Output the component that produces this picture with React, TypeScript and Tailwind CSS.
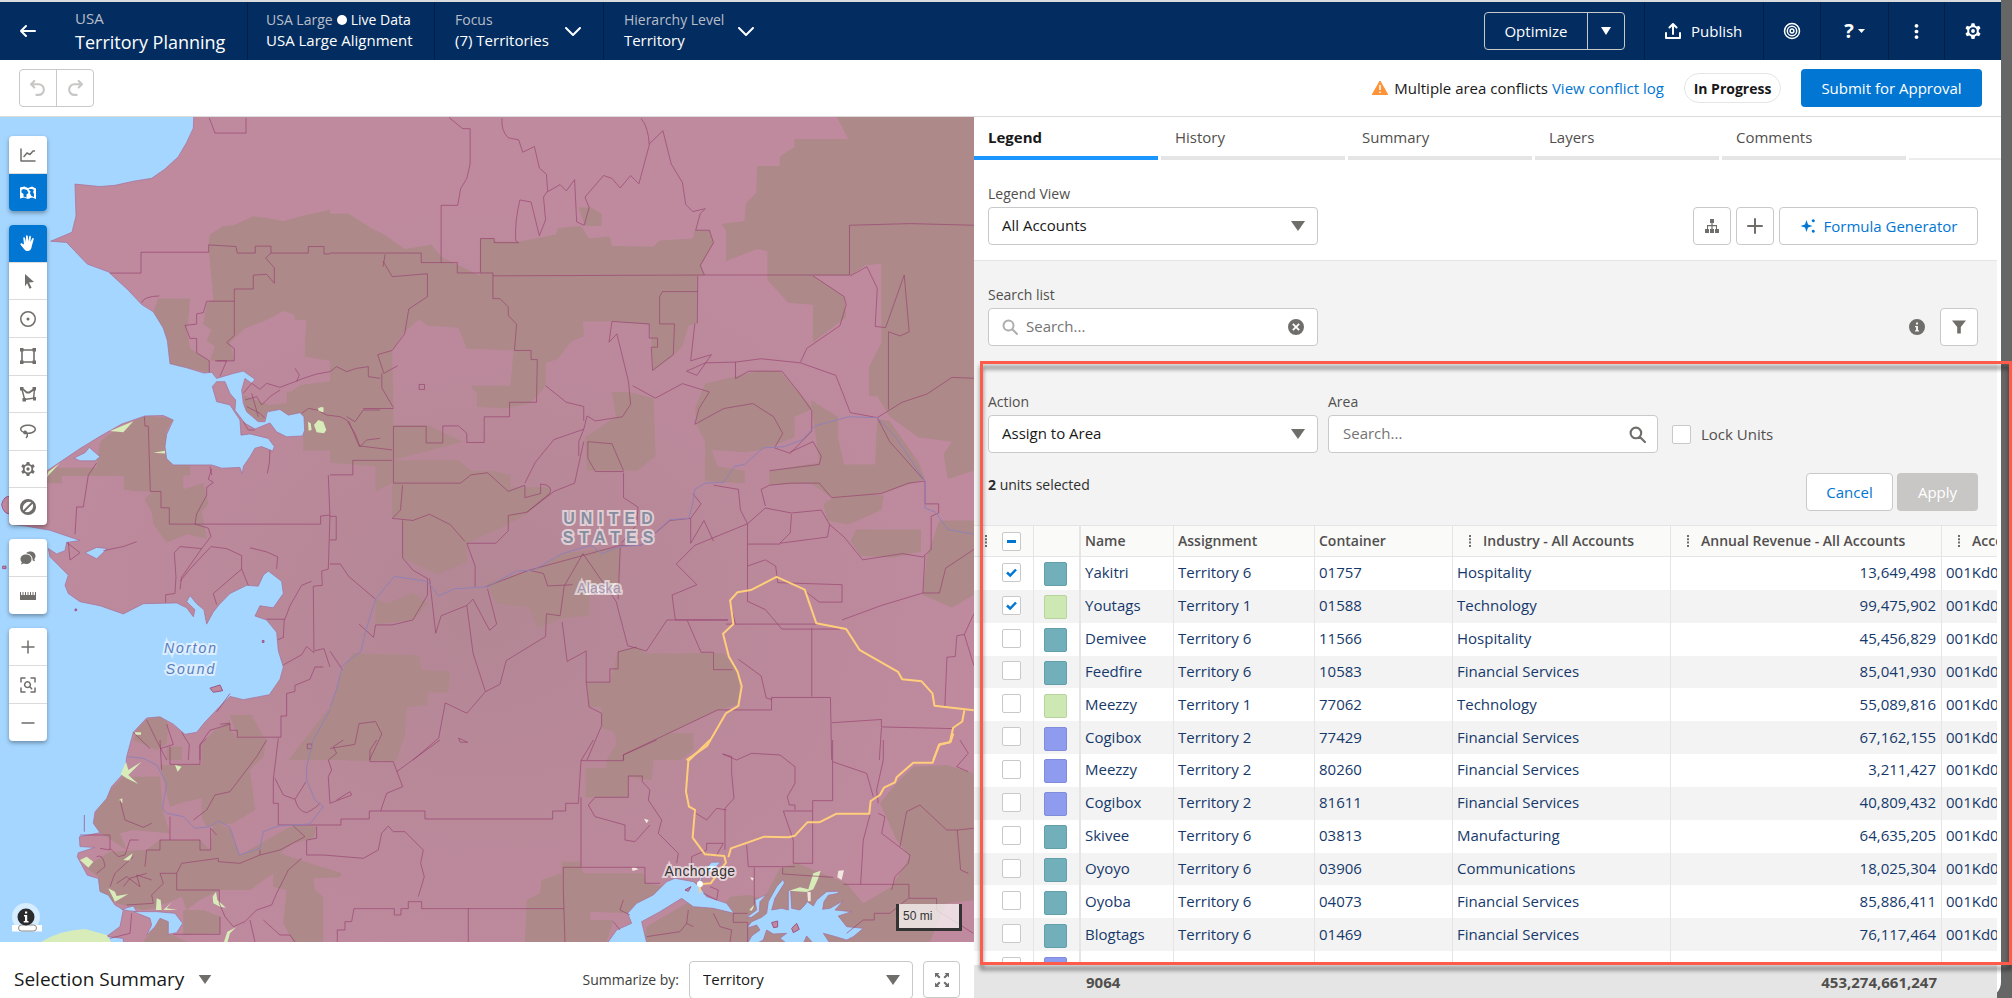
import React from "react";

type IconProps = { d: string; className?: string; viewBox?: string };

function Glyph({ d, className = "h-4 w-4", viewBox = "0 0 16 16" }: IconProps) {
  return (
    <svg viewBox={viewBox} className={className} fill="currentColor" aria-hidden="true">
      <path fillRule="evenodd" d={d} />
    </svg>
  );
}

function Stroke({ d, className = "h-4 w-4", viewBox = "0 0 16 16", width = 2 }: IconProps & { width?: number }) {
  return (
    <svg
      viewBox={viewBox}
      className={className}
      fill="none"
      stroke="currentColor"
      strokeWidth={width}
      strokeLinecap="round"
      strokeLinejoin="round"
      aria-hidden="true"
    >
      <path d={d} />
    </svg>
  );
}

const GEAR =
  "M6.7 0h2.6l.5 2.1 1.5.9 2.1-.7 1.3 2.3-1.6 1.5v1.8l1.6 1.5-1.3 2.3-2.1-.7-1.5.9-.5 2.1H6.7l-.5-2.1-1.5-.9-2.1.7-1.3-2.3 1.6-1.5V6.1L1.300 4.600 2.600 2.300l2.100.7 1.500-.9ZM8 3.600a3.400 3.400 0 1 0 0 6.800 3.400 3.400 0 0 0 0-6.800Zm0 1.700a1.700 1.700 0 1 1 0 3.400 1.700 1.700 0 0 1 0-3.400Z";
const SEARCH = "M6.500 1.500a5 5 0 1 0 0 10 5 5 0 0 0 0-10M10.300 10.300 15 15";

const accounts = [
  { name: "Yakitri", assignment: "Territory 6", container: "01757", industry: "Hospitality", revenue: "13,649,498", checked: true },
  { name: "Youtags", assignment: "Territory 1", container: "01588", industry: "Technology", revenue: "99,475,902", checked: true },
  { name: "Demivee", assignment: "Territory 6", container: "11566", industry: "Hospitality", revenue: "45,456,829" },
  { name: "Feedfire", assignment: "Territory 6", container: "10583", industry: "Financial Services", revenue: "85,041,930" },
  { name: "Meezzy", assignment: "Territory 1", container: "77062", industry: "Technology", revenue: "55,089,816" },
  { name: "Cogibox", assignment: "Territory 2", container: "77429", industry: "Financial Services", revenue: "67,162,155" },
  { name: "Meezzy", assignment: "Territory 2", container: "80260", industry: "Financial Services", revenue: "3,211,427" },
  { name: "Cogibox", assignment: "Territory 2", container: "81611", industry: "Financial Services", revenue: "40,809,432" },
  { name: "Skivee", assignment: "Territory 6", container: "03813", industry: "Manufacturing", revenue: "64,635,205" },
  { name: "Oyoyo", assignment: "Territory 6", container: "03906", industry: "Communications", revenue: "18,025,304" },
  { name: "Oyoba", assignment: "Territory 6", container: "04073", industry: "Financial Services", revenue: "85,886,411" },
  { name: "Blogtags", assignment: "Territory 6", container: "01469", industry: "Financial Services", revenue: "76,117,464" },
  { name: "Yakitri", assignment: "Territory 2", container: "02138", industry: "Hospitality", revenue: "28,882,807" },
];

const swatches: Record<string, string> = {
  "Territory 1": "bg-[#cde8b2] border-[#b9d39f]",
  "Territory 2": "bg-[#8e9bef] border-[#808cd9]",
  "Territory 6": "bg-[#71b0bb] border-[#629faa]",
};

function HeaderMenu({ label, value }: { label: string; value: string }) {
  return (
    <button className="flex items-center gap-4 border-r border-[#021f45] pl-5 pr-[22px] text-left">
      <span className="block pb-[3px] text-[14px] leading-5">
        <span className="block text-[#b8bec9]">{label}</span>
        <span className="block text-[15px]">{value}</span>
      </span>
      <Stroke d="M1 1l7 7 7-7" viewBox="0 0 16 9" className="h-[9px] w-4" />
    </button>
  );
}

function Header() {
  return (
    <header className="flex h-[60px] shrink-0 border-t-2 border-[#d9dbde] bg-[#032d60] text-white">
      <button aria-label="Back" className="flex w-[56px] items-center justify-center">
        <Stroke d="M15 7H1M6 2L1 7l5 5" viewBox="0 0 16 14" className="h-3.5 w-4" />
      </button>
      <div className="flex w-[192px] flex-col justify-center border-r border-[#021f45] pb-0.5 pl-[19px]">
        <span className="text-[15px] leading-6 text-[#b8bec9]">USA</span>
        <h1 className="whitespace-nowrap text-[18px] leading-6">Territory Planning</h1>
      </div>
      <div className="flex w-[187px] flex-col justify-center whitespace-nowrap border-r border-[#021f45] pb-[3px] pl-[18px] text-[15px] leading-5">
        <span className="flex items-center text-[14px]">
          <span className="text-[#b8bec9]">USA Large</span>
          <span className="mx-1 h-2.5 w-2.5 rounded-full bg-white" />
          Live Data
        </span>
        <span>USA Large Alignment</span>
      </div>
      <HeaderMenu label="Focus" value="(7) Territories" />
      <button className="flex items-center gap-3.5 pl-5 text-left">
        <span className="block pb-[3px] text-[14px] leading-5">
          <span className="block text-[#b8bec9]">Hierarchy Level</span>
          <span className="block text-[15px]">Territory</span>
        </span>
        <Stroke d="M1 1l7 7 7-7" viewBox="0 0 16 9" className="h-[9px] w-4" />
      </button>

      <div className="ml-auto flex">
        <div className="my-auto mr-[19px] flex h-[38px] rounded border border-[#c9c9c9]">
          <button className="w-[103px] border-r border-[#c9c9c9] text-[15px]">Optimize</button>
          <button aria-label="Optimize options" className="flex w-9 items-center justify-center">
            <Glyph d="M0 0h10L5 8z" viewBox="0 0 10 8" className="h-2 w-2.5" />
          </button>
        </div>
        <button className="flex w-[119px] items-center gap-2.5 border-l border-[#021f45] pl-5 text-[15px]">
          <Stroke d="M8 11V1M4.500 4.500L8 1l3.500 3.500M1 10v5h14v-5" className="h-4 w-4" />
          Publish
        </button>
        <button aria-label="Target" className="flex w-[57px] items-center justify-center border-l border-[#021f45]">
          <svg viewBox="0 0 18 18" className="h-[18px] w-[18px]" fill="none" stroke="currentColor" strokeWidth="1.500">
            <circle cx="9" cy="9" r="7.500" />
            <circle cx="9" cy="9" r="4.700" />
            <circle cx="9" cy="9" r="1.900" />
          </svg>
        </button>
        <button aria-label="Help" className="flex w-[68px] items-center justify-center gap-1 border-l border-[#021f45]">
          <span className="text-[20px] font-bold">?</span>
          <Glyph d="M0 0h7L3.500 4z" viewBox="0 0 7 4" className="h-1 w-[7px]" />
        </button>
        <button aria-label="More" className="flex w-14 items-center justify-center border-l border-[#021f45]">
          <Glyph
            d="M8 0a2 2 0 1 0 .01 0zM8 6a2 2 0 1 0 .01 0zM8 12a2 2 0 1 0 .01 0z"
            className="h-[15px] w-[15px]"
          />
        </button>
        <button aria-label="Settings" className="flex w-[57px] items-center justify-center border-l border-[#021f45]">
          <Glyph d={GEAR} viewBox="0 0 16 14" className="h-4 w-[18px]" />
        </button>
      </div>
    </header>
  );
}

function ActionBar() {
  return (
    <div className="flex h-[57px] shrink-0 items-center border-b border-[#dddbda] bg-white pl-[19px] pr-[19px] text-[15px]">
      <div className="flex h-[38px] rounded border border-[#c9c9c9] text-[#c9c7c5]">
        <button aria-label="Undo" className="flex w-[37px] items-center justify-center border-r border-[#c9c9c9]">
          <Stroke d="M4 1L1 4l3 3M1.500 4H8a5 5 0 0 1 0 10H6" viewBox="0 0 15 15" className="h-4 w-4" />
        </button>
        <button aria-label="Redo" className="flex w-[36px] items-center justify-center">
          <Stroke d="M11 1l3 3-3 3M13.500 4H7a5 5 0 0 0 0 10h2" viewBox="0 0 15 15" className="h-4 w-4" />
        </button>
      </div>
      <svg viewBox="0 0 16 14" className="ml-auto mr-1.5 h-3.5 w-4">
        <path d="M8 0 16 14H0z" fill="#fe9339" stroke="#fe9339" strokeLinejoin="round" />
        <path d="M8 4v5M8 10.500v1.500" stroke="#fff" strokeWidth="1.500" />
      </svg>
      <span className="text-[#181818]">
        Multiple area conflicts{" "}
        <a href="#conflicts" className="text-[#0176d3]">
          View conflict log
        </a>
      </span>
      <span className="ml-5 flex h-[30px] w-[97px] items-center justify-center rounded-full border border-[#e5e5e5] text-[14px] font-bold text-[#181818]">
        In Progress
      </span>
      <button className="ml-5 h-[38px] w-[181px] rounded bg-[#0176d3] text-[15px] text-white">Submit for Approval</button>
    </div>
  );
}

const tools = [
  { label: "Select", d: "M5 1l9 8-5 .4 2.600 5.400-2 .9-2.500-5.500L5 13.500z" },
  {
    label: "Radius",
    d: "M8 0a8 8 0 1 1 0 16A8 8 0 0 1 8 0m0 1.500a6.500 6.500 0 1 0 0 13 6.500 6.500 0 0 0 0-13M8 6.500a1.500 1.500 0 1 1 0 3 1.500 1.500 0 0 1 0-3",
  },
  {
    label: "Rectangle",
    d: "M0 0h3.500v1.200h9V0H16v3.500h-1.200v9H16V16h-3.500v-1.200h-9V16H0v-3.500h1.200v-9H0zM2.800 3.500v9h.7v.7h9v-.7h.7v-9h-.7v-.7h-9v.7z",
  },
  {
    label: "Polygon",
    d: "M0 1h3.500v1.500L7 5.500h2L12.500 3V1H16v3.500h-1L14.500 11H16v3.500h-3V13l-7 1v1.500H2.500V12H3.500L1.500 4.500H0zM3 4.200L5 12h1v.6l7-1V11l.6-6.300L9.500 7.500h-3z",
  },
  {
    label: "Lasso",
    d: "M8 1.500c4.500 0 8 2 8 4.700 0 2.800-3.500 4.800-8 4.800v2.500l-1.500 2-1-1 1-1.500v-2.200c-1 1-3.500.5-3.500-1.300C1 8.700 0 7.500 0 6.200 0 3.500 3.500 1.500 8 1.500M8 3C4.500 3 1.500 4.500 1.500 6.200c0 .8.700 1.500 1.800 2.200 1-1.500 3.200-1.300 4.200 1.100 4 0 7-1.500 7-3.300S11.500 3 8 3",
  },
  { label: "Settings", d: GEAR, viewBox: "0 0 16 14" },
  {
    label: "Clear",
    d: "M8 0a8 8 0 1 1 0 16A8 8 0 0 1 8 0M3.300 11.300l8-8A6.200 6.200 0 0 0 3.300 11.300m9.400-6.600-8 8a6.200 6.200 0 0 0 8-8",
  },
];

const toolButton = "flex w-full flex-1 items-center justify-center text-[#706e6b]";
const toolGroup = "flex flex-col divide-y divide-[#dddbda] overflow-hidden rounded bg-white shadow-[0_2px_4px_rgba(0,0,0,0.35)]";

function MapToolbar() {
  return (
    <div className="absolute left-[9px] top-[19px] flex w-[38px] flex-col gap-3.5">
      <div className={`${toolGroup} h-[75px]`}>
        <button aria-label="Chart" className={toolButton}>
          <Stroke d="M1 2v12h14M4 9.500l3-3.500 3 1.500 3-3.500h1.500" width={1.500} />
        </button>
        <button aria-label="Map" className="flex w-full flex-1 items-center justify-center bg-[#0176d3] text-white">
          <Glyph d="M0 2.500l4.500-1 3.500 1.500 4-1.500 4 2V14l-4-1.500L8 14l-4-1.500-4 1zM1.500 5v2.500l2 1.500v2.500l3 1V9.500l2-1.500-1.500-3L3.500 4zM9.500 4l-1 1 2 1-.5 2.500 1.500 2.500 2.500 1V9l-1-2 1-2-2-1z" />
        </button>
      </div>
      <div className={`${toolGroup} h-[300px]`}>
        <button aria-label="Pan" className="flex w-full flex-1 items-center justify-center bg-[#0176d3] text-white">
          <Glyph d="M4 9.500L3.300 3.200C3.200 2 4.700 1.800 5 3l.9 4L6 1.300C6 0 7.600 0 7.800 1.200L8.200 6.500 9.200 1.500C9.500.4 11 .6 10.900 1.900L10.400 7.200l1.700-3.600c.5-1 1.900-.5 1.600.7l-1.800 6.500C11.300 14 10.500 16 8 16c-2 0-3.400-1-4.400-2.600L.6 9.700c-.6-1 .6-1.900 1.500-1.200z" />
        </button>
        {tools.map((tool) => (
          <button key={tool.label} aria-label={tool.label} className={toolButton}>
            <Glyph d={tool.d} viewBox={tool.viewBox} />
          </button>
        ))}
      </div>
      <div className={`${toolGroup} h-[75px]`}>
        <button aria-label="Comments" className={toolButton}>
          <Glyph d="M6 4.500c3.300 0 5.500 2 5.500 4.700S9.300 14 6 14c-.8 0-1.500-.1-2.200-.4L1 14.500l.8-2.300C1 11.400.5 10.400.5 9.200.5 6.500 2.700 4.500 6 4.500M6 3.300C7 2 8.600 1.500 10.200 1.500c3.200 0 5.300 2 5.300 4.500 0 1.200-.5 2.200-1.200 3l.7 2.300-2.300-.8C13 6.500 10 3.500 6 3.300" />
        </button>
        <button aria-label="Measure" className={toolButton}>
          <Glyph d="M0 4h1v3h1.500V4h1v3H5V4h1v3h1.500V4h1v3H10V4h1v3h1.500V4h1v3H15V4h1v8H0z" />
        </button>
      </div>
      <div className={`${toolGroup} h-[113px]`}>
        <button aria-label="Zoom in" className={toolButton}>
          <Stroke d="M8 2v12M2 8h12" width={1.500} />
        </button>
        <button aria-label="Zoom to fit" className={toolButton}>
          <Stroke d="M1 5V1h4M11 1h4v4M15 11v4h-4M5 15H1v-4M7.500 4.800a2.900 2.900 0 1 0 .01 0M9.800 9.800l1.900 1.900" width={1.500} />
        </button>
        <button aria-label="Zoom out" className={toolButton}>
          <Stroke d="M2 8h12" width={1.500} />
        </button>
      </div>
    </div>
  );
}

const WEST = "translate(0 120) scale(0.3333 0.4082)";
const KOTZEBUE = "translate(180 350) scale(0.3333)";
const INTERIOR = "translate(330 110) scale(0.4146)";
const SOUTHWEST = "translate(0 740) scale(0.3333)";
const SOUTHEAST = "translate(480 740) scale(0.3333)";
const SOUND = "translate(600 830) scale(0.3333)";

const forest = [
  {
    tile: WEST,
    d: "M625 305L630 280 670 260 700 258 760 236 800 240 850 248 905 235 990 220V640L900 650 880 660 860 690 905 700 870 715 910 730V810H990V590L915 580V545L920 490 885 490 880 475 850 468 800 490 735 510 690 545 703 590 630 590 645 555 620 540 635 515 610 500 620 450 640 440ZM475 437H570L565 490 560 510 570 560 628 590V618L560 607 510 597 502 540 460 470ZM435 725L520 730 500 760 495 810 520 845H570V870H550V905L610 890 625 940 605 960 620 1025 560 1015 500 1035 460 990 455 960 435 930 455 910H410L372 905V872H185V890H140L150 852H290L300 790 320 775 380 745Z",
  },
  {
    tile: KOTZEBUE,
    d: "M190 135L225 150 270 165 320 160 320 125H345L370 155V185L325 195 300 178 262 183 250 212 230 210 200 185Z",
  },
  {
    tile: INTERIOR,
    d: "M1222 15H1553V700L1300 690V620L1330 560V370L1290 375 1255 400H1165L1240 450 1245 500 1165 560V470L1105 465 1055 410V340L1030 335 955 365V290L945 275 1000 268 1003 225 1028 200 1030 135H1085V112L1120 90V70H1250Z" +
      "M0 250L45 250 100 285 130 300 180 335 245 325 270 355 362 400V310H395L400 318 455 318 545 300 550 285 605 280 625 310 675 305 680 328 780 330 795 315 875 310 880 290H915L925 320 895 375 903 400H887L885 515 865 520 850 570 830 590 780 630 775 550 770 518 685 510H610L612 545 580 560 550 600 520 610V665L500 690 480 708 420 720 355 715V685L340 665H435L443 580 330 575 310 525 235 520 215 505 175 540 150 580 153 760H235L320 800 150 845V900L110 920 110 860 0 850Z" +
      "M600 235H630L655 250V280H615Z M150 845H310L340 870 390 870 435 880V910H530V930L480 970 430 1000 330 1045V1090L260 1120 175 1080V990L150 980Z" +
      "M680 680H720L780 695 785 835 740 870H620L615 790 690 740ZM905 660L1040 628 1085 630 1130 680 1165 720 1120 740 1120 790 1040 820 1000 825 920 820 935 860 1000 870 1000 900 905 895V800L885 760 880 720Z" +
      "M1160 700L1225 740 1225 790 1240 855H1315L1320 745 1350 750 1420 850 1435 890 1330 925 1210 935 1160 900 1060 905 1060 870 1180 850ZM1320 690H1553V870L1490 890 1480 830 1500 800 1420 790 1350 740ZM1190 950L1240 920 1335 930 1330 965 1250 1000 1200 990ZM1270 1012H1425V1065L1360 1080 1280 1075 1255 1040ZM1470 990H1553V1170L1500 1200 1430 1170 1440 1075Z" +
      "M500 1105L560 1070 600 1065 702 1055 695 1160 650 1140 625 1165V1220L560 1225 500 1250 480 1200 400 1190 380 1140ZM110 1180L140 1190 200 1165 235 1190 200 1230 110 1240ZM55 1310L215 1315 220 1350 290 1355 285 1405H235V1435L185 1440 180 1510 160 1568H-100L0 1440 30 1350ZM695 1305L740 1295 760 1310 950 1310 985 1360 990 1430 930 1450 700 1560 685 1500 655 1490V1440H625L620 1380H675Z",
  },
  {
    tile: SOUTHWEST,
    d: "M605 15L640 -25 690 -60V-30L712 -8H800L790 50 750 90 765 210 700 250 620 260 605 230V175L540 190 510 200 480 75H605ZM410 -30L440 -62 480 -70 505 -50 500 10 470 30 400 0ZM500 20H545V60H500ZM690 -75H755L790 -10H712ZM330 150L370 110 480 110 490 220 510 280 400 270 360 280 380 330 300 278 280 250 290 205ZM255 380L330 335 440 330 480 300 530 400 480 500 430 510 350 490 300 460 295 410ZM440 330L480 300 600 300 630 330 640 250 690 265 720 345 880 255 950 260 940 295 880 310 840 340 930 370 1025 400 1020 412 940 415 945 450 970 470V606H880L850 550 860 450 820 440V400L750 450H660L600 480 560 510 545 470 500 490 430 500 440 340ZM550 510H610L660 530V580L550 585ZM1040 -30H1190V62H1040ZM430 606L480 530 505 540V580L560 606Z",
  },
  {
    tile: SOUTHEAST,
    d: "M317 85H380V60L430 -20H640V30L600 60H520L515 120 445 110V172H317ZM1200 190L1250 130 1300 80 1400 75 1481 100V480L1400 490 1350 606H490L500 560 620 490 730 500 750 470 810 465 850 480 900 385 950 370 1100 430 1150 490 1235 440 1290 350 1250 300ZM135 606L140 480 180 460 185 420 245 400V365H300L310 400 490 400 500 430 550 440 450 520 330 515V540L400 540 380 606Z",
  },
];

const waters = [
  {
    tile: WEST,
    d: "M-5 -20H582L580 20 560 55 535 90 495 120 455 143 400 150 345 160 300 163 225 157 228 235 216 275 152 297 200 300 235 330 262 353 325 372 385 417 425 452 460 470 490 510 502 540 510 597 560 607 612 620 635 618 650 633 700 621 730 615 765 635 755 645 735 633 725 662 730 694 740 715 775 739 795 739 802 715 840 709 865 723 900 717 912 727 914 760 908 774 860 776 830 764 810 742 765 757 735 743 705 711 707 686 690 670 675 641 650 641 637 653 650 690 690 698 720 735 723 772 750 769 805 780 823 800 818 811 785 800 765 804 750 825 730 849 727 867 720 851 665 853 635 845 570 845 520 845 500 830 495 800 500 770 520 735 490 724 435 725 365 745 300 775 240 805 140 860 28 925V990L80 995 150 1005 240 1030 200 1035 195 1055 170 1063 145 1050 150 1070 205 1115 195 1140 205 1160 240 1180 300 1190 370 1210 430 1185 530 1183 560 1195 580 1217 585 1200 560 1180 570 1165 590 1185 612 1200 620 1235 640 1205 660 1185 690 1160 740 1140 775 1142 790 1115 805 1105 845 1130 850 1160 820 1195 780 1190 765 1215 800 1225 830 1255 835 1300 850 1340 840 1370 808 1408 730 1420 690 1412 650 1445 615 1475 590 1500 555 1505 520 1480 480 1462 440 1465 400 1500 380 1560 375 1597 335 1633 320 1662 285 1695 280 1723 300 1746 238 1756 240 1780 285 1782 235 1795 232 1805 262 1850 295 1858 300 1890 325 1899 345 1923 370 1935 360 1976 320 2000 370 2005V2020H-5ZM222 828L255 815 268 802 300 825 285 835 240 835ZM255 1060L290 1047 322 1050 290 1075Z",
  },
  {
    tile: SOUTHWEST,
    d: "M400 515L470 515 525 520 548 550 530 578 505 583 505 545 480 535 465 560 440 585 455 555 450 535ZM365 508L400 498 410 515 385 512Z",
  },
  {
    tile: SOUTHEAST,
    d: "M383 608L410 570 455 550 443 520 470 490 520 465 560 425 585 415 640 425 660 440 680 470 740 490 762 520 700 505 640 500 605 475 540 515 485 545 500 608ZM670 392L695 367 722 366 700 390 668 402 662 425 655 425Z",
  },
  {
    tile: SOUND,
    d: "M443 340L455 318 480 300 470 285 440 295 455 275 485 262 500 250 505 215 530 170 550 148 553 160 525 205 515 240 545 235 565 240 565 180 572 182 575 235 600 240 612 228 622 215 640 228 650 210 668 195 680 185 715 184V190L685 196 672 215 668 238 690 235 730 212 705 240 755 245 715 258 740 290 790 295 760 320 740 330 700 318 670 310 690 340H640L620 318 610 340H560L540 325 560 310 520 312 500 300 490 330 470 340ZM440 262L470 240 465 210 500 193 480 215 478 245 455 262Z",
  },
];

const islands = [
  { tile: WEST, d: "M5 942Q12 920 30 922V965Q10 965 5 942ZM630 1392L660 1384 668 1398 640 1402ZM8 1093h10v6h-10ZM225 1198h5v4h-5ZM787 1275h5v5h-5Z" },
  { tile: SOUTHEAST, d: "M875 548l18-5v18l-12 2ZM935 565l15-15 8 18-18 10ZM615 450l18-10-8 14Z" },
];

const wetlands = [
  { tile: WEST, d: "M330 762L400 738 370 765ZM140 875L180 840 145 862ZM460 815L495 810V817ZM955 705h15v10h-15ZM405 1500h18v6h-18Z" },
  { tile: KOTZEBUE, d: "M402 225L415 210 430 215 439 240 432 250 410 247ZM384 215L392 220 395 240 386 242ZM420 172h10v14h-8Z" },
  {
    tile: SOUTHWEST,
    d: "M120 608Q180 570 255 567L320 585 335 608ZM240 360L260 350 280 365 265 383ZM325 445L345 455 350 468 385 462 345 485ZM638 470L648 455 652 480 678 503 660 500 640 490ZM470 475L482 480 485 510H468ZM490 510L515 487 500 505 532 510ZM672 606L682 575 708 562 690 580 682 608ZM362 103L378 65 385 90 425 65 385 105 415 132 380 115ZM357 180l10-5v15ZM525 75l20 5-12 15ZM370 360L398 340 390 362Z",
  },
  { tile: SOUND, d: "M568 182L600 172 625 178 640 130 662 122 655 145 640 178 620 186ZM448 240L467 220 455 242Z" },
];

const glaciers = [
  { tile: SOUND, d: "M95 113L105 112 115 118 98 123ZM715 122L732 121 725 150 712 142ZM622 186h10v28h-8ZM450 142l12 2-5 8Z" },
  { tile: SOUTHEAST, d: "M492 236l14 4-6 10Z" },
];

const borders = [
  {
    tile: WEST,
    d: "M628 -5L645 32H738V-5M330 375H423V324H626V306L708 310 712 326H766V309H813V326L925 326V310H972V328H990M813 326L797 338 823 362V400L800 378 760 380V414H703V528L680 545 703 560V590H645M703 444H620L610 472 590 475V500L555 503 570 535H590V570L628 590V618M425 448Q430 432 478 431M660 628L680 590 650 590M433 727L435 750 445 750 451 910H483V950H508V990H962V970L990 968M290 840L265 870 250 948H230L225 1015M200 1035L240 1060 210 1078 205 1035M310 1055L370 1045 410 1033M635 855L625 880 640 888 620 900V920L590 965 585 990 625 1000 633 1020 605 1050 540 1045 523 1060 528 1120 525 1160 497 1163V1182M605 1050L545 1120 540 1150M540 1130L570 1100 633 1045 680 1050 725 1067V1100L640 1160 650 1187M725 1100L745 1140M750 1048L800 1058 833 1070 830 1100M985 870L990 970 985 1100 965 1105 967 1140 940 1142 942 1305 920 1290 905 1310 850 1335M935 1130L905 1140 870 1190 855 1223H800M853 1223L850 1268 833 1273M990 1340L972 1295 945 1300M970 1340H945L930 1370 885 1385V1400L860 1405V1460H843V1512H712V1495H690V1478L660 1480M690 1480L630 1495 600 1530V1568M650 1450L690 1405M440 1470L470 1520 500 1568M500 1480L520 1530 480 1540M400 1500L450 1540M545 1500L568 1530 565 1568",
  },
  {
    tile: KOTZEBUE,
    d: "M190 130L215 100 240 118 260 100 300 112 345 95 370 85 410 72 450 65 470 50 500 65 530 55 565 50V80L600 85M345 55L358 75 350 95M195 150L230 140 245 165 270 140 300 120M200 170L240 190 255 205M215 130L235 200M190 215L205 240 225 240M270 300L268 340 262 370M365 190L385 175 410 180 440 195 480 200 500 210 525 250 540 290 560 270 600 265M500 200L525 215 550 180H600M90 350L95 375",
  },
  {
    tile: INTERIOR,
    d: "M287 18L320 45H338V130L330 165 315 190 308 230H268V368M415 20Q412 50 430 67L455 72 465 102 493 88 505 140 522 155 525 195 515 210 520 265 505 303 485 222 458 217Q445 270 448 315L455 320H396V310H363V392M525 197L555 180 570 195 590 168 595 270 613 278 625 235 615 210 660 158 680 165 700 188 725 158 745 178 770 85Q768 40 750 20M770 82L803 50 823 130 850 175 858 228 875 245 905 238 893 250 882 290H915L925 320 893 375 903 398" +
      "M0 345H220V368H307V393H393V455H410L430 475V495L450 517 445 580H485V602H500L498 705H433V740H372V802H330V780L310 762H272V803H232V763H153V900H315L340 880 380 875 430 920 470 905 470 935 508 925V902Q540 905 530 925L475 970M393 400L900 398H1253V278L1400 274 1553 278M128 378L133 348M128 365L150 402 235 395V450L190 480 180 540 150 580 115 590 130 635 163 617M125 635V670L153 718M80 720L153 720M887 400L886 515M886 438H802L795 450V516H831L828 590 778 628 775 572H790V550H770V516L680 510 673 560 692 540 720 655 725 710 705 740 640 750 620 738 612 770M520 665L570 705 612 715V750M880 515L870 605 920 590 885 640 860 630 905 610 978 608V648L1010 630 1090 630 1130 680 1162 725V775L1110 828 1072 815 1092 780 1070 740 1020 708 950 720 880 758 890 720 915 680 850 660 785 695 730 665M978 608L1040 600 1135 610 1220 640 1255 730 1320 742 1380 705 1440 685 1500 645 1553 647M1135 608L1150 575 1230 520 1245 470 1240 450 1165 400M1255 400L1295 378 1320 430 1315 522 1340 525 1385 398 1397 535 1375 545 1347 535V722M1320 742L1350 800 1435 895V950H1468V972L1450 980V1060L1430 1078 1380 1070 1285 1085 1240 1030 1205 1000 1185 965 1113 972 1050 960 1007 998V1185M1435 895L1395 900 1330 925 1210 935 1180 900 1110 900 1060 905 1040 915 1050 955M1060 870L1180 855 1185 835 1165 800 1110 825M1113 975L1110 1020 1085 1045 1200 1030 1205 1000M1007 1047H1085M925 905L985 915 990 965 1007 998 880 1050 835 1095 885 1145 825 1170 833 1230H960L813 1230 763 1305 718 1292 690 1185 610 1070 565 1148 555 1220 522 1215 520 1270 425 1328 410 1385 375 1403 330 1455 278 1430 262 1515 200 1568M700 1055L695 1180M875 925L895 950 870 985 870 1045 902 990 925 1040M870 985L820 990 750 1050 700 1050 480 1110 375 1150M480 1110L515 1118 525 1148 585 1145M708 875V935L743 958 740 1000 703 1045M708 872H640L622 840V800L680 805 708 870M612 800L590 900 540 920 475 970 430 978V1015L400 1045H330L350 1100V1150M470 900L495 850 540 795 612 770 600 800V835M175 905L170 965 150 985 200 990 240 975 290 1000 325 1040M175 990V1080L200 1110 235 1130 235 1170 200 1230 150 1242H110L105 1272 70 1240M240 1130L255 1262 268 1220 330 1195 345 1180 385 1255 402 1240 380 1155M330 1195L345 1310 375 1403M0 1095H25L45 1125 110 1180M560 1235L572 1330 618 1305V1380H675V1348H695V1307L740 1295M618 1380L625 1440 655 1455V1485L620 1568M955 1240L1180 1240M1162 1250V1415M978 1240L965 1190M1007 1185L1050 1205 1090 1252H1230M1007 1100L1050 1085 1075 1100 1080 1140 1235 1145V1187H1180L1145 1160M862 1232L895 1308H925V1350H970M985 1325L1040 1365 1052 1418 1065 1422V1417H1207L1210 1568M1065 1420V1447H935L708 1555V1568M1210 1478L1330 1470V1488L1500 1492M1330 1490L1325 1568M1235 1230L1330 1195 1430 1165 1470 1165 1485 1105 1553 1060M1430 1165L1435 1075M1553 1215L1530 1265 1512 1268 1508 1318 1488 1320 1483 1440M1530 1265L1553 1340M150 845H55V880H0M45 750L70 810 150 820M215 662h13v12h-13ZM310 1515l22 10h-18ZM0 980H15V1037H0M0 1305L30 1350M95 1568L125 1505 110 1475 70 1480 60 1530 0 1540",
  },
  {
    tile: SOUTHWEST,
    d: "M620 -5L600 15V73H510V20M800 0L770 50 690 155 645 165 620 210 580 240M835 -5L820 120V190H835V255H1023V237H1108V213H1275V237H1440M825 115L850 165 885 178 918 125M885 178Q895 215 920 218 955 200 960 188M1030 0L1000 20 1010 40 985 60 995 90 985 110 990 190 1055 165 1050 155 1010 180M1130 0L1110 30V65H1180L1208 140 1160 160 1142 213M1190 95L1320 0M510 230V300H480V330H440L435 380M510 300H600V330H632V265L650 285M530 450V400L545 370 655 355V365L720 370 780 345V330M780 345L840 330 915 290 880 258M950 260V295L920 300V345L970 345 1090 355 1135 330 1145 280 1165 258 1180 275 1215 275 1245 305 1270 330 1262 370 1273 410 1255 470M530 450H658V490L675 530 700 560 735 545 770 510 815 495 830 460 865 390 905 355M480 400L530 400M480 400L490 430 455 465 460 490 380 495M660 530V583H520M750 540L765 606M790 540L840 585H870L885 606M1012 606V570H1035V545H1055L1062 506H1183V525H1203V506H1225V485H1265V506H1440M1405 506V606M360 180L375 240 430 262 455 250M300 325L330 330V285H240M330 325L355 350 375 345 390 300 415 300M330 440L345 400 400 350M350 430L380 410 420 440 410 405 455 420M370 440L390 415 440 400M480 0L485 90M290 350Q310 340 315 380L290 400M395 520L390 580 330 595M253 225V275M922 12h13v14h-13Z",
  },
  {
    tile: SOUTHEAST,
    d: "M0 237H218V213H257V190H295L303 62H430V45L530 0M303 172V380M303 62L340 0M303 382H250V450L255 606M303 382H495V430L540 430M0 506H252M445 172V108H487V125L510 150 505 180 545 240 535 280 595 340 590 370M445 172H345L325 195 345 230 435 255V300L465 305 510 255M728 42L755 50V100L762 175 735 205V330M728 42L770 60 815 40 900 45 945 80V130L922 170 928 195H945V210M910 213H998V370H940V300L910 213M998 213V182H1058V0M1058 65L1160 100 1180 170M1210 0V60L1190 150 1195 190M1440 0L1465 40 1430 80 1465 95M640 215L680 240 710 205 740 210M1170 225L1150 300 1142 433M1195 220L1215 230 1205 280 1290 345 1285 370 1245 410 1235 450M1260 320L1280 215 1320 195 1400 270 1432 270 1481 265M1432 270L1442 390 1465 400M1090 433H1287V475H1370V510L1480 580M800 315L805 380H945M823 382V500M908 382V402L1060 412M760 520V547H803V606M803 520H760M1285 475L1230 520H1183V540H1150L1100 580M635 390V350L680 330V310H730L710 345M500 590L600 575 620 550 640 560M620 550L625 510M700 520L720 560 755 570 750 606M430 480L420 510 450 525M400 545L420 570M690 440L715 450 710 480 670 460",
  },
];

const rivers = [
  { tile: INTERIOR, d: "M0 1440L15 1400 30 1340 75 1305 85 1260 110 1180 155 1125 235 1137 262 1172 300 1155 380 1150 450 1112 490 1110 560 1070 630 1050 655 1070 700 1053 750 1050 820 988 865 985 875 950 880 915 905 900 950 898 975 860 1000 855 1045 815 1095 812 1140 795 1170 762 1250 740 1320 742 1365 790 1435 895 1435 960 1460 970 1490 1012 1553 1023" },
  { tile: SOUTHWEST, d: "M385 50L430 55 470 75 500 130 488 205 500 220 550 230 585 265 630 260 655 242 690 262 718 345 780 325 790 275 835 258 930 252 970 200 945 180 920 120V80L940 0 990 -90" },
];

const roads = [
  { tile: INTERIOR, d: "M860 1568L910 1533 955 1455 985 1437 993 1390 983 1355 962 1318 948 1263 973 1240 965 1183 983 1163 1015 1158 1077 1126 1145 1157 1173 1238 1245 1252 1277 1302 1370 1355 1380 1373 1427 1378 1453 1407 1458 1437 1553 1448M1530 1448L1525 1475 1503 1490 1495 1525 1470 1530 1455 1568" },
  { tile: SOUTHEAST, d: "M690 0L625 63 618 155 627 200 645 210 638 293 675 343 733 348 738 368 692 430 665 432M745 352L753 325 853 290 925 292 945 287 982 247H1018L1070 221H1168L1172 183 1200 165 1212 143 1245 127 1250 112 1300 68H1358L1377 15 1412 6 1420 -20M660 440V458" },
];

const halo = "stroke-white/60 stroke-4 [paint-order:stroke] [font-family:'Liberation_Sans',sans-serif]";

function MapCanvas() {
  return (
    <svg
      viewBox="0 117 974 825"
      preserveAspectRatio="xMidYMid slice"
      className="absolute inset-0 h-full w-full bg-[#bf8a9e]"
      role="img"
      aria-label="Territory map of Alaska"
    >
      <defs>
        <radialGradient id="relief" cx="50%" cy="60%" r="50%">
          <stop offset="0" stopColor="#a8848c" stopOpacity="0.5" />
          <stop offset="1" stopColor="#a8848c" stopOpacity="0" />
        </radialGradient>
      </defs>
      <rect x="0" y="117" width="974" height="825" fill="url(#relief)" />
      {forest.map((s, i) => (
        <path key={i} d={s.d} transform={s.tile} fill="#ad8989" />
      ))}
      {waters.map((s, i) => (
        <path key={i} d={s.d} transform={s.tile} fill="#a5d6ff" stroke="#a76f98" strokeOpacity="0.7" strokeWidth="1" vectorEffect="non-scaling-stroke" />
      ))}
      {islands.map((s, i) => (
        <path key={i} d={s.d} transform={s.tile} fill="#bf8a9e" stroke="#9c5586" strokeWidth="1" vectorEffect="non-scaling-stroke" />
      ))}
      {wetlands.map((s, i) => (
        <path key={i} d={s.d} transform={s.tile} fill="#d7ecb8" />
      ))}
      {glaciers.map((s, i) => (
        <path key={i} d={s.d} transform={s.tile} fill="#f1e6e0" />
      ))}
      {borders.map((s, i) => (
        <path key={i} d={s.d} transform={s.tile} fill="none" stroke="#97416f" strokeOpacity="0.65" strokeWidth="1" strokeLinejoin="round" vectorEffect="non-scaling-stroke" />
      ))}
      {rivers.map((s, i) => (
        <path key={i} d={s.d} transform={s.tile} fill="none" stroke="#9181b5" strokeWidth="1" vectorEffect="non-scaling-stroke" />
      ))}
      {roads.map((s, i) => (
        <path key={i} d={s.d} transform={s.tile} fill="none" stroke="#ffce7a" strokeWidth="2" strokeLinejoin="round" vectorEffect="non-scaling-stroke" />
      ))}
      <circle cx="700" cy="884" r="3" fill="#fff" />
      <g textAnchor="middle">
        <text x="611" y="524" className={`${halo} fill-[#848c9e] text-[16px] font-bold tracking-[6px]`}>UNITED</text>
        <text x="611" y="543" className={`${halo} fill-[#848c9e] text-[16px] font-bold tracking-[6px]`}>STATES</text>
        <text x="599" y="593" className={`${halo} fill-[#a592ab] text-[14px] tracking-wide`}>Alaska</text>
        <text x="191" y="653" className={`${halo} fill-[#5b7dbd] text-[14px] italic tracking-[2px]`}>Norton</text>
        <text x="191" y="674" className={`${halo} fill-[#5b7dbd] text-[14px] italic tracking-[2px]`}>Sound</text>
        <text x="700" y="876" className={`${halo} fill-[#333] text-[14px] tracking-wide`}>Anchorage</text>
      </g>
    </svg>
  );
}

function Arrow({ className = "h-2.5 w-3.5" }: { className?: string }) {
  return <Glyph d="M0 0h14L7 10z" viewBox="0 0 14 10" className={className} />;
}

function SelectBox({ id, value, className }: { id: string; value: string; className: string }) {
  return (
    <div className={`relative ${className}`}>
      <select id={id} className="h-[38px] w-full appearance-none rounded border border-[#c9c9c9] bg-white pb-0.5 pl-[13px] text-[15px] text-[#181818]">
        <option>{value}</option>
      </select>
      <span className="pointer-events-none absolute inset-y-0 right-[13px] flex items-center text-[#706e6b]">
        <Arrow />
      </span>
    </div>
  );
}

function MapPane() {
  return (
    <section className="flex min-w-0 flex-[974] flex-col">
      <div className="relative min-h-0 flex-1 overflow-hidden">
        <MapCanvas />
        <MapToolbar />
        <button aria-label="Map information" className="absolute bottom-[10px] left-3 h-[30px] w-[30px]">
          <svg viewBox="0 0 30 30" className="h-full w-full">
            <circle cx="14" cy="15" r="14" fill="#d6ecff" />
            <path d="M0 23h30v6.500H0z" fill="#fff" />
            <rect x="6.500" y="23" width="18" height="6" rx="3" fill="#fff" stroke="#8a8a8a" />
            <circle cx="14" cy="15" r="8.500" fill="#2b2b2b" />
            <path d="M12 13h3.200v6h1.300v1.500h-4.800V19H13v-4.500h-1zM13 9.500h2.200v2H13z" fill="#fff" />
          </svg>
        </button>
        <div className="absolute bottom-[11px] right-[12px] flex h-[27px] w-[66px] items-center border-3 border-t-0 border-[#333] bg-white/70 pl-1 text-[12px] text-[#333] [font-family:'Liberation_Sans',sans-serif]">
          50 mi
        </div>
      </div>
      <div className="flex h-[56px] shrink-0 items-end bg-white pr-3.5">
        <button className="flex h-[37px] items-center gap-3.5 pl-3.5 text-[19px] text-[#181818]">
          Selection Summary
          <span className="text-[#706e6b]">
            <Arrow className="h-[9px] w-3.5" />
          </span>
        </button>
        <label htmlFor="summarize" className="ml-auto mr-2.5 flex h-[37px] items-center text-[14px] text-[#3e3e3c]">
          Summarize by:
        </label>
        <SelectBox id="summarize" value="Territory" className="mr-2.5 h-[37px] w-[224px]" />
        <button aria-label="Expand" className="flex h-[37px] w-[37px] items-center justify-center rounded border border-[#c9c9c9] text-[#706e6b]">
          <Glyph
            d="M1 1h4.500L4 2.500l2.500 2.500L5 6.500 2.500 4 1 5.500zM15 1v4.500L13.500 4 11 6.500 9.500 5 12 2.500 10.500 1zM1 15v-4.500L2.500 12 5 9.500 6.500 11 4 13.500 5.500 15zM15 15h-4.500L12 13.500 9.500 11 11 9.500 13.500 12 15 10.500z"
            className="h-4 w-4"
          />
        </button>
      </div>
    </section>
  );
}

function ColumnWidths() {
  return (
    <colgroup>
      <col className="w-[60px]" />
      <col className="w-[47px]" />
      <col className="w-[93px]" />
      <col className="w-[141px]" />
      <col className="w-[138px]" />
      <col className="w-[218px]" />
      <col className="w-[271px]" />
      <col />
    </colgroup>
  );
}

function Grip() {
  return (
    <svg viewBox="0 0 2 12" className="h-3 w-0.5 shrink-0" fill="#706e6b" aria-hidden="true">
      <path d="M0 0h2v2H0zM0 3.300h2v2H0zM0 6.600h2v2H0zM0 10h2v2H0z" />
    </svg>
  );
}

function CheckBox({ label, checked }: { label: string; checked?: boolean }) {
  return (
    <span className="relative block h-[19px] w-[19px]">
      <input
        type="checkbox"
        aria-label={label}
        defaultChecked={checked}
        className="peer block h-[19px] w-[19px] appearance-none rounded-xs border border-[#c9c9c9] bg-white"
      />
      <svg
        viewBox="0 0 19 19"
        className="pointer-events-none absolute inset-0 hidden h-full w-full peer-checked:block"
        fill="none"
        stroke="#0176d3"
        strokeWidth="2.500"
      >
        <path d="M5 9.500l3.200 3L14 6.500" />
      </svg>
    </span>
  );
}

const cell = "border-r border-[#e5e5e5]";

function UnitsTable() {
  return (
    <>
      <div className="min-h-0 flex-1 overflow-hidden bg-white">
        <table className="h-[459px] w-full table-fixed border-separate border-spacing-0 text-[15px] leading-5 text-[#16396b]">
          <ColumnWidths />
          <thead>
            <tr className="h-8 bg-[#fafaf9] text-left text-[14px] text-[#514f4d] *:border-y *:border-[#e5e5e5] *:p-0 *:font-semibold">
              <th className={cell}>
                <div className="flex items-center">
                  <span className="ml-[11px] mr-[15px]">
                    <Grip />
                  </span>
                  <span className="relative">
                    <CheckBox label="Select all units" />
                    <span className="pointer-events-none absolute left-[5px] top-2 h-[3px] w-[9px] bg-[#0176d3]" />
                  </span>
                </div>
              </th>
              <th className="border-r-2 border-[#e5e5e5]" aria-label="Color" />
              <th className={cell}><span className="pl-1">Name</span></th>
              <th className={cell}><span className="pl-1">Assignment</span></th>
              <th className={cell}><span className="pl-1">Container</span></th>
              <th className={cell}>
                <div className="flex items-center gap-3 whitespace-nowrap pl-4">
                  <Grip />
                  Industry - All Accounts
                </div>
              </th>
              <th className={cell}>
                <div className="flex items-center gap-3 whitespace-nowrap pl-4">
                  <Grip />
                  Annual Revenue - All Accounts
                </div>
              </th>
              <th>
                <div className="flex items-center gap-3 overflow-hidden whitespace-nowrap pl-4">
                  <Grip />
                  Account ID
                </div>
              </th>
            </tr>
          </thead>
          <tbody>
            {accounts.map((row, i) => (
              <tr key={i} className="even:bg-[#f3f3f3] *:pb-0.5 *:pt-0">
                <td className={`${cell} pl-7`}>
                  <CheckBox label={`Select ${row.name}`} checked={row.checked} />
                </td>
                <td className="border-r-2 border-[#e5e5e5] pl-2.5 pr-0">
                  <span className={`mt-1 block h-6 w-[23px] rounded-xs border ${swatches[row.assignment]}`} />
                </td>
                <td className={`${cell} pl-1`}>{row.name}</td>
                <td className={`${cell} pl-1`}>{row.assignment}</td>
                <td className={`${cell} pl-1`}>{row.container}</td>
                <td className={`${cell} pl-1`}>{row.industry}</td>
                <td className={`${cell} pr-[5px] text-right`}>{row.revenue}</td>
                <td className="overflow-hidden whitespace-nowrap pl-1">001Kd000</td>
              </tr>
            ))}
          </tbody>
        </table>
      </div>
      <table className="h-[33px] w-full shrink-0 table-fixed border-separate border-spacing-0 bg-[#e5e5e5] text-[15px] leading-5 font-bold text-[#514f4d]">
        <ColumnWidths />
        <tbody>
          <tr className="*:border-r *:border-[#d4d4d4] *:py-0 last:*:border-r-0">
            <td />
            <td />
            <td className="pl-[5px]">9064</td>
            <td />
            <td />
            <td />
            <td className="pr-[5px] text-right">453,274,661,247</td>
            <td />
          </tr>
        </tbody>
      </table>
    </>
  );
}

const tabs = ["Legend", "History", "Summary", "Layers", "Comments"];
const fieldLabel = "block text-[14px] leading-5 text-[#514f4d]";
const iconButton = "flex h-[38px] w-[38px] items-center justify-center rounded border border-[#c9c9c9] bg-white text-[#706e6b]";

function LegendPane() {
  return (
    <section className="flex min-w-0 flex-[1023] flex-col bg-white pr-1">
      <nav className="-mr-1 flex h-[43px] shrink-0 items-end gap-[3px] text-[15px]">
        {tabs.map((tab, i) => (
          <button
            key={tab}
            className={
              i === 0
                ? "h-full w-[184px] border-b-4 border-[#1b96ff] pl-3.5 pt-0.5 text-left font-bold text-[#181818]"
                : "h-full w-[184px] border-b-4 border-[#e5e5e5] pl-3.5 pt-0.5 text-left text-[#514f4d]"
            }
          >
            {tab}
          </button>
        ))}
        <span className="flex-1 border-b-2 border-[#ececec]" />
      </nav>

      <div className="flex h-[101px] shrink-0 items-end border-b border-[#e5e5e5] pb-[15px] pl-3.5 pr-[19px]">
        <div>
          <label htmlFor="legend-view" className={`${fieldLabel} mb-[3px]`}>Legend View</label>
          <SelectBox id="legend-view" value="All Accounts" className="w-[330px]" />
        </div>
        <div className="ml-auto flex gap-[5px]">
          <button aria-label="Hierarchy" className={iconButton}>
            <Glyph d="M6 1h4v4H8.600v2H13v4h2v4h-4v-4h1V8.200H8.600V11H10v4H6v-4h1.400V8.200H4V11h1v4H1v-4h2V7h4.400V5H6z" />
          </button>
          <button aria-label="Add" className={iconButton}>
            <Stroke d="M8 1v14M1 8h14" />
          </button>
          <button className="flex h-[38px] w-[199px] items-center justify-center gap-2 rounded border border-[#c9c9c9] text-[15px] text-[#0176d3]">
            <Glyph d="M6.500 2L8 6.500 12.500 8 8 9.500 6.500 14 5 9.500.5 8 5 6.500zM13.300 1.300a1.500 1.500 0 1 1-.01 0M13.300 11.800a1.500 1.500 0 1 1-.01 0" />
            Formula Generator
          </button>
        </div>
      </div>

      <div className="flex h-[100px] shrink-0 items-end bg-[#f3f3f3] pb-[15px] pl-3.5 pr-[19px]">
        <div>
          <label htmlFor="search-list" className={`${fieldLabel} mb-[3px]`}>Search list</label>
          <div className="relative w-[330px]">
            <span className="absolute inset-y-0 left-3.5 flex items-center text-[#aeaeae]">
              <Stroke d={SEARCH} />
            </span>
            <input
              id="search-list"
              placeholder="Search..."
              className="h-[38px] w-full rounded border border-[#c9c9c9] bg-white pb-0.5 pl-[37px] text-[15px] placeholder:text-[#747474]"
            />
            <button aria-label="Clear" className="absolute inset-y-0 right-3.5 flex items-center text-[#706e6b]">
              <Glyph d="M8 0a8 8 0 1 1 0 16A8 8 0 0 1 8 0M5.500 4.200L4.200 5.500 6.700 8l-2.500 2.500 1.300 1.300L8 9.300l2.500 2.500 1.300-1.300L9.300 8l2.500-2.500-1.300-1.300L8 6.700z" />
            </button>
          </div>
        </div>
        <div className="ml-auto flex items-center gap-[15px]">
          <span className="text-[#706e6b]">
            <Glyph d="M8 0a8 8 0 1 1 0 16A8 8 0 0 1 8 0M7 3.500v2h2v-2zM6 7v1.300h1v3H6v1.300h4v-1.300H9V7z" />
          </span>
          <button aria-label="Filter" className={iconButton}>
            <Glyph d="M1 1.500h14L9.800 8v6.500H6.200V8z" />
          </button>
        </div>
      </div>

      <div className="relative flex min-h-0 flex-1 flex-col">
        <div className="h-[164px] shrink-0 bg-[#f3f3f3] pl-3.5 pr-[19px] pt-[31px]">
          <div className="flex items-end gap-2.5">
            <div>
              <label htmlFor="action" className={`${fieldLabel} mb-[3px]`}>Action</label>
              <SelectBox id="action" value="Assign to Area" className="w-[330px]" />
            </div>
            <div>
              <label htmlFor="area" className={`${fieldLabel} mb-[3px]`}>Area</label>
              <div className="relative w-[330px]">
                <input
                  id="area"
                  placeholder="Search..."
                  className="h-[38px] w-full rounded border border-[#c9c9c9] bg-white pb-0.5 pl-3.5 text-[15px] placeholder:text-[#747474]"
                />
                <span className="absolute inset-y-0 right-3 flex items-center text-[#706e6b]">
                  <Stroke d={SEARCH} className="h-[17px] w-[17px]" />
                </span>
              </div>
            </div>
            <label className="ml-1 flex h-[38px] items-center gap-2.5 text-[15px] text-[#514f4d]">
              <CheckBox label="Lock Units" />
              Lock Units
            </label>
          </div>
          <div className="flex justify-between pt-5">
            <p className="text-[14px] leading-6 text-[#2e2e2e]">
              <b>2</b> units selected
            </p>
            <div className="flex gap-1">
              <button className="h-[38px] w-[87px] rounded border border-[#c9c9c9] bg-white text-[15px] text-[#0176d3]">Cancel</button>
              <button className="h-[38px] w-[81px] rounded bg-[#c9c7c5] text-[15px] text-white">Apply</button>
            </div>
          </div>
        </div>
        <UnitsTable />
        <div className="pointer-events-none absolute -right-[15px] bottom-[33px] left-[6px] top-0 border-3 border-[#fe5b4b] drop-shadow-[0_5px_2px_rgba(0,0,0,0.5)]" />
      </div>
    </section>
  );
}

export default function App() {
  return (
    <div className="flex h-screen overflow-hidden bg-[#666] pr-[11px] [font-family:'Open_Sans',sans-serif]">
      <div className="flex min-w-0 flex-1 bg-linear-to-r from-[#0b1626] from-50% to-[#666] to-50%">
        <div className="flex min-w-0 flex-1 flex-col">
          <Header />
          <ActionBar />
          <main className="flex min-h-0 flex-1 *:first:rounded-bl-2xl *:first:bg-white *:last:rounded-br-2xl">
            <MapPane />
            <LegendPane />
          </main>
        </div>
      </div>
    </div>
  );
}
